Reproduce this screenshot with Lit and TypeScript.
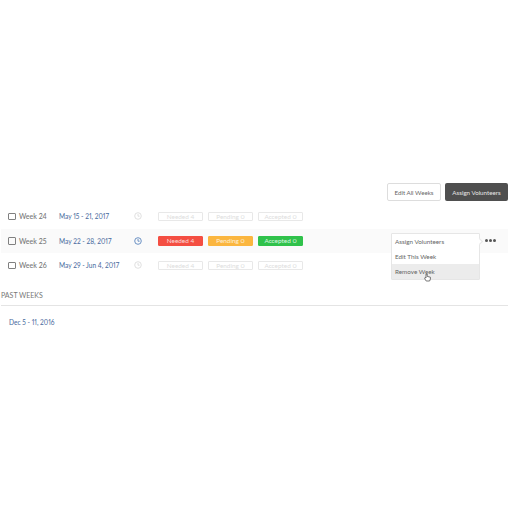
import { LitElement, html, css, svg } from "lit";
import { customElement } from "lit/decorators.js";

const clock = (color: string) => html`<svg class="clock" width="8" height="8" viewBox="0 0 8 8" fill="none" stroke=${color} stroke-width="0.9">
  ${svg`<circle cx="4" cy="4" r="3.3"></circle><path d="M4 2v2.2h1.6"></path>`}
</svg>`;

const rows = [
  { week: "Week 24", date: "May 15 - 21, 2017", active: false },
  { week: "Week 25", date: "May 22 - 28, 2017", active: true },
  { week: "Week 26", date: "May 29 - Jun 4, 2017", active: false },
];

@customElement("app-root")
export class AppRoot extends LitElement {
  static styles = css`
    :host {
      display: block;
      width: 512px;
      height: 512px;
      background: #fff;
      font-family: Lato, "Open Sans", "Liberation Sans", sans-serif;
      font-variant-numeric: proportional-nums;
      color: #666;
      overflow: hidden;
    }
    .page { padding: 183px 4px 0 1px; }
    .actions { display: flex; justify-content: flex-end; gap: 4px; height: 18px; margin-bottom: 3px; }
    .btn {
      box-sizing: border-box; height: 18px; border-radius: 2px; display: flex; align-items: center; justify-content: center;
      font-size: 6.2px; white-space: nowrap;
    }
    .btn.light { width: 54px; border: 1px solid #ddd; background: #fff; color: #666; }
    .btn.dark { width: 63px; background: #4f4f4f; color: #e8e8e8; }
    .row { position: relative; height: 24.5px; display: flex; align-items: center; font-size: 7px; }
    .row.active { background: #fafafa; }
    .check { box-sizing: border-box; width: 7.5px; height: 7.5px; border: 1.3px solid #808080; border-radius: 1px; margin-left: 7px; }
    .week { width: 40px; margin-left: 3.5px; color: #777; font-size: 7px; font-weight: 500; }
    .date { width: 75px; color: #47699c; font-size: 6.6px; }
    .clock { display: block; }
    .tags { display: flex; gap: 5px; margin-left: 16px; }
    .tag {
      box-sizing: border-box; width: 45px; height: 9.5px; border-radius: 1px; border: 1px solid #e8e8e8;
      display: flex; align-items: center; justify-content: center; font-size: 6.4px; color: #ddd; white-space: nowrap;
    }
    .tag.red { background: #f44e42; border-color: #f44e42; color: #fbdcd9; }
    .tag.amber { background: #fbb63f; border-color: #fbb63f; color: #fff1d8; }
    .tag.green { background: #30c24b; border-color: #30c24b; color: #dcf6e0; }
    .dots { position: absolute; left: 484px; top: 0; bottom: 0; display: flex; align-items: center; gap: 1px; }
    .dots i { width: 3px; height: 3px; border-radius: 50%; background: #555; display: block; }
    .menu {
      position: absolute; left: 390px; top: 4px; width: 89px; box-sizing: border-box; background: #fff;
      border: 1px solid #e6e6e6; border-radius: 1px; z-index: 2; font-size: 6.3px; color: #666;
    }
    .menu::after {
      content: ""; position: absolute; right: -3px; top: 5px; width: 4px; height: 4px; background: #fff;
      border-top: 1px solid #e6e6e6; border-right: 1px solid #e6e6e6; transform: rotate(45deg);
    }
    .menu div { height: 15px; display: flex; align-items: center; padding-left: 3px; }
    .menu div.hover { background: #ececec; }
    .cursor { position: absolute; left: 32px; top: 39px; }
    .past { margin-top: 13px; font-size: 7px; color: #777; line-height: 9px; padding-bottom: 5.5px; border-bottom: 1px solid #e4e4e4; }
    .old { margin: 12px 0 0 8px; font-size: 6.6px; color: #47699c; line-height: 9px; }
  `;

  render() {
    return html`<div class="page">
      <div class="actions">
        <div class="btn light">Edit All Weeks</div>
        <div class="btn dark">Assign Volunteers</div>
      </div>
      ${rows.map(
        (r) => html`<div class="row ${r.active ? "active" : ""}">
          <div class="check"></div>
          <div class="week">${r.week}</div>
          <div class="date">${r.date}</div>
          ${clock(r.active ? "#5b86bd" : "#ddd")}
          <div class="tags">
            <div class="tag ${r.active ? "red" : ""}">Needed 4</div>
            <div class="tag ${r.active ? "amber" : ""}">Pending 0</div>
            <div class="tag ${r.active ? "green" : ""}">Accepted 0</div>
          </div>
          ${r.active
            ? html`<div class="menu">
                  <div>Assign Volunteers</div>
                  <div>Edit This Week</div>
                  <div class="hover">Remove Week</div>
                  <svg class="cursor" width="7" height="9" viewBox="0 0 7 9">
                    <path d="M2 1v4L1 4.5.6 5.5 2.2 8h3.4L6.4 6V4.2L3.2 3.4V1z" fill="#fff" stroke="#555" stroke-width="0.8"></path>
                  </svg>
                </div>
                <div class="dots"><i></i><i></i><i></i></div>`
            : ""}
        </div>`
      )}
      <div class="past">PAST WEEKS</div>
      <div class="old">Dec 5 - 11, 2016</div>
    </div>`;
  }
}
